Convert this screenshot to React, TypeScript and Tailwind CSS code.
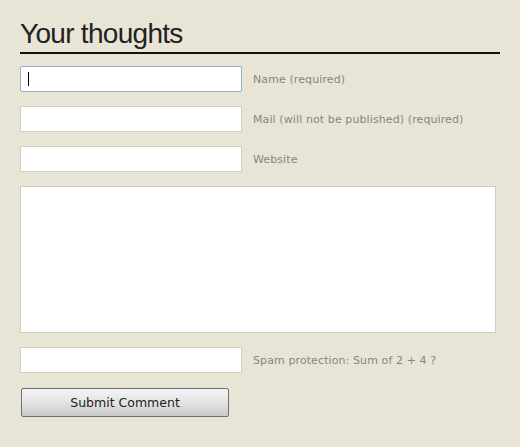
export default function App() {
  const fields = [
    { label: "Name (required)", focused: true },
    { label: "Mail (will not be published) (required)", focused: false },
    { label: "Website", focused: false },
  ];

  return (
    <div className="w-[520px] h-[447px] bg-[#e8e5d7] pl-5 pt-[17px] overflow-hidden">
      <h2 className="w-[480px] border-b-[2px] border-[#111] pb-[1px] text-[28px] leading-[34px] tracking-[-0.7px] text-[#222] font-['Liberation_Sans',Arial,sans-serif]">
        Your thoughts
      </h2>

      <form className="mt-[12px] flex flex-col">
        {fields.map((f) => (
          <div key={f.label} className="flex items-center mb-[14px]">
            <div
              className={`w-[222px] h-[26px] bg-white border flex items-center pl-[7px] ${
                f.focused
                  ? "border-[#8fb3cc] rounded-[2px]"
                  : "border-[#d2cfc2]"
              }`}
            >
              {f.focused && <span className="w-px h-[14px] bg-black" />}
            </div>
            <label className="ml-[11px] mt-[2px] text-[11px] tracking-[0.1px] text-[#86857d] font-['DejaVu_Sans',Verdana,sans-serif]">
              {f.label}
            </label>
          </div>
        ))}

        <div className="w-[476px] h-[147px] bg-white border border-[#cfccbe]" />

        <div className="flex items-center mt-[14px]">
          <div className="w-[222px] h-[26px] bg-white border border-[#d2cfc2]" />
          <label className="ml-[11px] mt-[2px] text-[11px] tracking-[0.1px] text-[#86857d] font-['DejaVu_Sans',Verdana,sans-serif]">
            Spam protection: Sum of 2 + 4 ?
          </label>
        </div>

        <button
          type="button"
          className="mt-[15px] ml-px w-[208px] h-[29px] pt-px rounded-[2px] border border-[#707070] bg-gradient-to-b from-[#f4f4f6] via-[#e4e4e6] to-[#c9c9c9] text-[12.5px] text-[#222] font-['DejaVu_Sans',Verdana,sans-serif]"
        >
          Submit Comment
        </button>
      </form>
    </div>
  );
}
